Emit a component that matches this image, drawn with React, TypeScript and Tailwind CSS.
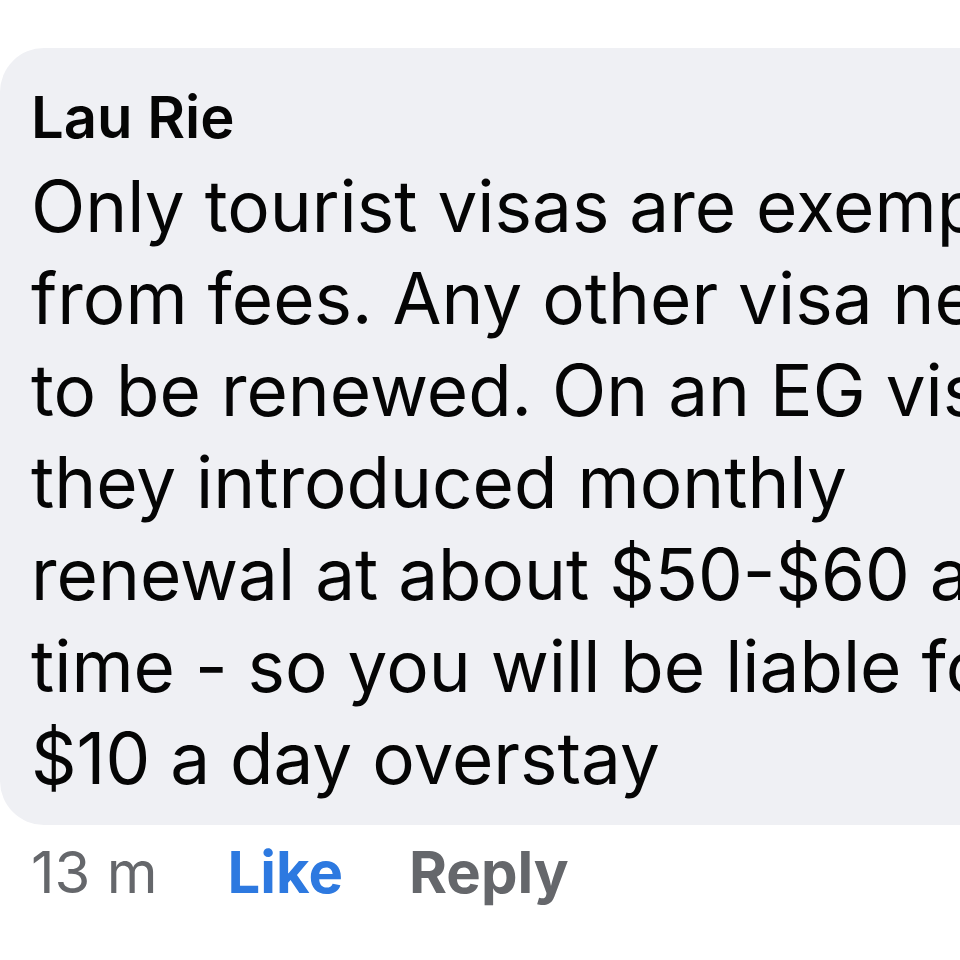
export default function App() {
  const lines = [
    'Only tourist visas are exempt',
    'from fees. Any other visa needs',
    'to be renewed. On an EG visa',
    'they introduced monthly',
    'renewal at about $50-$60 a',
    'time - so you will be liable for',
    '$10 a day overstay',
  ];

  return (
    <div className="w-[960px] h-[960px] overflow-hidden bg-white pt-[48px] font-['Inter','Liberation_Sans',sans-serif]">
      <div className="w-[1200px] rounded-[44px] bg-[#eff0f4] pl-[31px] pt-[35px] pb-[21px]">
        <div className="text-[58px] leading-[68px] font-semibold text-[#050505] whitespace-nowrap">Lau Rie</div>
        <div className="mt-[9px] text-[71px] leading-[92px] text-[#050505]">
          {lines.map((l) => (
            <div key={l} className="whitespace-nowrap">{l}</div>
          ))}
        </div>
      </div>
      <div className="mt-[13px] pl-[31px] flex items-baseline text-[58px] leading-[68px] whitespace-nowrap">
        <span className="text-[#65676b]">13 m</span>
        <span className="ml-[70px] font-bold text-[#2d79e0]">Like</span>
        <span className="ml-[66px] font-bold text-[#65676b]">Reply</span>
      </div>
    </div>
  );
}
